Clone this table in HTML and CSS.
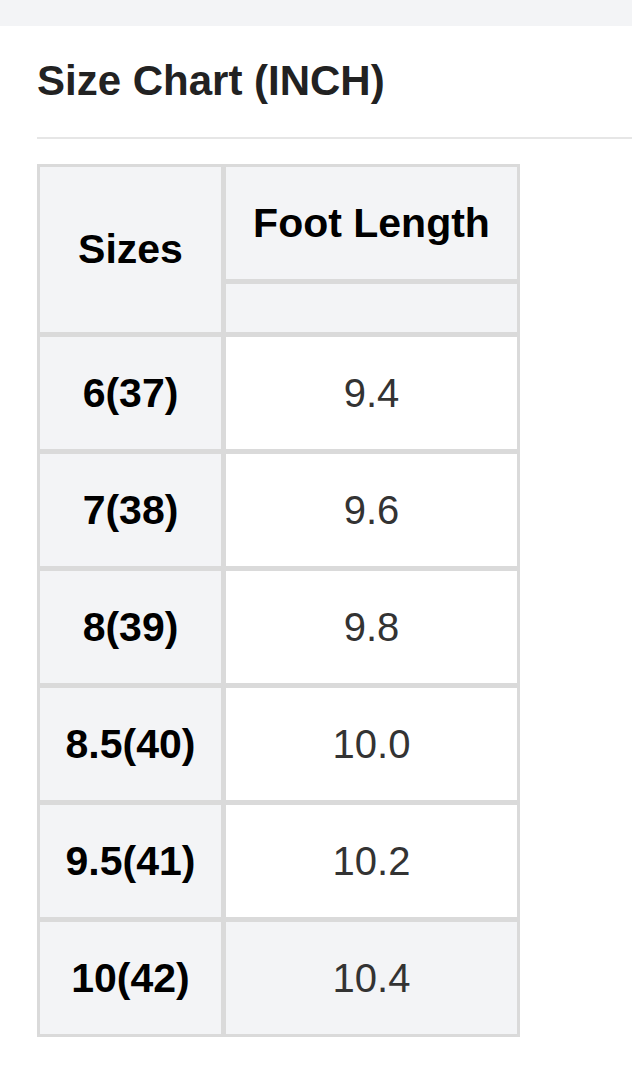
FILE: index.html
```html
<!DOCTYPE html>
<html>
<head>
<meta charset="utf-8">
<link rel="stylesheet" href="styles.css">
</head>
<body>
<div class="topbar"></div>
<section class="chart">
  <h1 class="title">Size Chart (INCH)</h1>
  <hr class="divider">
  <table class="sizes">
    <colgroup><col class="c1"><col class="c2"></colgroup>
    <tr class="head"><th rowspan="2" class="label">Sizes</th><th class="label">Foot Length</th></tr>
    <tr class="sub"><th class="blank"></th></tr>
    <tr><th>6(37)</th><td>9.4</td></tr>
    <tr><th>7(38)</th><td>9.6</td></tr>
    <tr><th>8(39)</th><td>9.8</td></tr>
    <tr><th>8.5(40)</th><td>10.0</td></tr>
    <tr><th>9.5(41)</th><td>10.2</td></tr>
    <tr class="alt"><th>10(42)</th><td>10.4</td></tr>
  </table>
</section>
</body>
</html>
```

FILE: styles.css
```css
html, body {
  margin: 0;
  padding: 0;
  background: #ffffff;
  font-family: "Liberation Sans", Arial, sans-serif;
}
.topbar {
  height: 26px;
  background: #f3f4f6;
}
.chart {
  padding-left: 37px;
}
.title {
  margin: 31px 0 0 0;
  font-size: 42px;
  font-weight: bold;
  color: #222222;
  line-height: 47px;
}
.divider {
  margin: 33px 0 0 0;
  border: 0;
  height: 2px;
  background: #e6e6e6;
}
.sizes {
  margin-top: 25px;
  border-collapse: separate;
  border-spacing: 1px;
  background: #dadada;
  table-layout: fixed;
  width: 483px;
}
.c1 { width: 185px; }
.c2 { width: 295px; }
.sizes th, .sizes td {
  box-sizing: border-box;
  border: 2px solid #dadada;
  padding: 0;
  height: 116px;
  text-align: center;
  vertical-align: middle;
  background: #ffffff;
}
.sizes th {
  font-size: 41px;
  font-weight: bold;
  color: #000000;
  background: #f3f4f6;
}
.sizes td {
  font-size: 40px;
  color: #333333;
}
.sizes .sub th.blank {
  height: 52px;
}
.sizes .alt td {
  background: #f3f4f6;
}
```
